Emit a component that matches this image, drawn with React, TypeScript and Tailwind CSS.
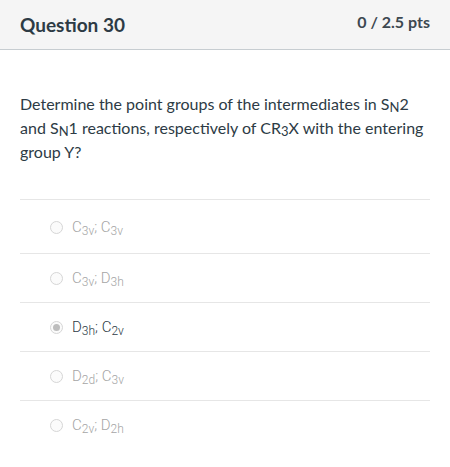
const options = [
  { a: ["C", "3v"], b: ["C", "3v"], selected: false },
  { a: ["C", "3v"], b: ["D", "3h"], selected: false },
  { a: ["D", "3h"], b: ["C", "2v"], selected: true },
  { a: ["D", "2d"], b: ["C", "3v"], selected: false },
  { a: ["C", "2v"], b: ["D", "2h"], selected: false },
];

function Sym({ s }: { s: string[] }) {
  return (
    <span>
      {s[0]}
      <span className="align-[-3px] text-[12px] leading-none">{s[1]}</span>
    </span>
  );
}

function Low({ children }: { children: string }) {
  return <span className="align-[-2px] text-[13px] leading-none">{children}</span>;
}

function Radio({ checked }: { checked: boolean }) {
  return (
    <span className="flex h-[13px] w-[13px] items-center justify-center rounded-full border border-[#d6d6d6] bg-[#fbfbfb]">
      {checked && <span className="h-[7px] w-[7px] rounded-full bg-[#bdbdbd]" />}
    </span>
  );
}

export default function App() {
  return (
    <div className="h-[467px] w-[450px] bg-white font-['Lato',sans-serif] text-[#2d3b45]">
      {/* header */}
      <div className="flex h-[50px] items-center justify-between border-b border-[#c7cdd1] bg-[#f5f5f5] px-[20px]">
        <h2 className="text-[19px] font-bold leading-none">Question 30</h2>
        <span className="-mt-[5px] text-[16px] font-bold leading-none text-[#3d4850]">0 / 2.5 pts</span>
      </div>

      <div className="px-[20px]">
        <p className="pt-[42px] pb-[35px] text-[16px] leading-[24px]">
          Determine the point groups of the intermediates in S<Low>N</Low>2 and S<Low>N</Low>1 reactions,
          respectively of CR<Low>3</Low>X with the entering group Y?
        </p>

        <div>
          {options.map((o, i) => (
            <div
              key={i}
              className={`flex items-center gap-[9px] border-t border-[#e6e6e6] pl-[30px] ${i === 0 ? "h-[54px] pt-[2px]" : "h-[49px]"}`}
            >
              <Radio checked={o.selected} />
              <span
                className={`font-['Roboto',sans-serif] text-[15px] font-light ${o.selected ? "text-[#2d3b45]" : "text-[#a5a5a5]"}`}
              >
                <Sym s={o.a} />; <Sym s={o.b} />
              </span>
            </div>
          ))}
        </div>
      </div>
    </div>
  );
}
